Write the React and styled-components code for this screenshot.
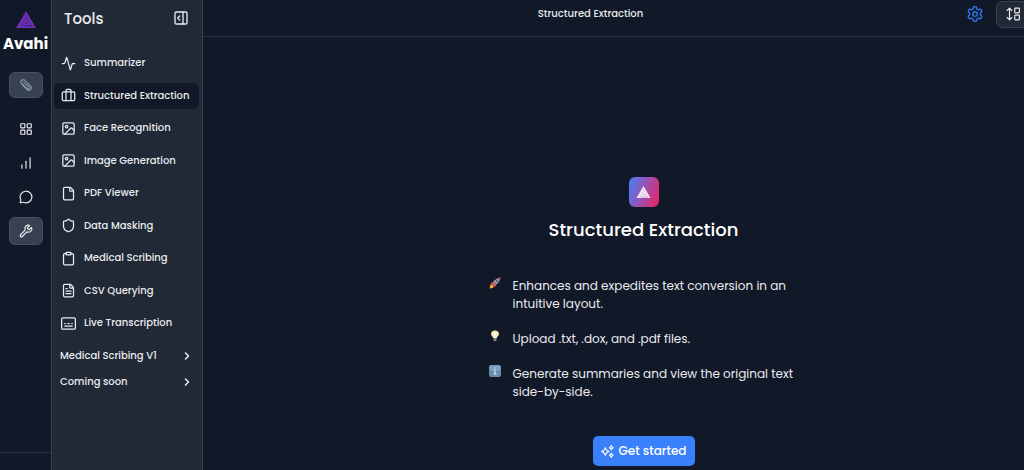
import React from "react";
import styled, { createGlobalStyle, ThemeProvider } from "styled-components";
import {
  Activity,
  Briefcase,
  ChartNoAxesColumnIncreasing,
  ChevronRight,
  Clipboard,
  File,
  FileText,
  Image,
  LayoutGrid,
  MessageCircle,
  PanelRightOpen,
  Settings,
  Shield,
  Wrench,
} from "lucide-react";

const theme = {
  bgColor: "#111827",
  panelColor: "#212936",
  lineColor: "#2b3442",
  raisedColor: "#374151",
  textColor: "#e9ebee",
  blueColor: "#3a80fb",
};

const GlobalStyle = createGlobalStyle`
  * {
    box-sizing: border-box;
  }

  body {
    margin: 0;
    background: ${theme.bgColor};
    color: ${theme.textColor};
    font-family: Poppins, Inter, sans-serif;
    font-size: 10px;
  }

  button {
    padding: 0;
    border: 0;
    background: none;
    color: inherit;
    font: inherit;
    cursor: pointer;
  }

  ul {
    margin: 0;
    padding: 0;
    list-style: none;
  }

  svg {
    display: block;
    flex-shrink: 0;
  }
`;

const Page = styled.div`
  display: flex;
  height: 100vh;
  overflow: hidden;
`;

const Rail = styled.nav`
  flex: 0 0 52px;
  display: flex;
  flex-direction: column;
  align-items: center;
  padding-top: 11px;
  border-right: 1px solid ${(props) => props.theme.raisedColor};
`;

const Brand = styled.div`
  margin: 4px 0 16px;
  color: #fff;
  font-size: 15px;
  line-height: 24px;
  font-weight: 700;
`;

const RailButton = styled.button`
  display: flex;
  justify-content: center;
  align-items: center;
  width: 34px;
  height: ${(props) => (props.$small ? "26px" : "28px")};
  border: 1px solid ${(props) => (props.$filled ? "#465060" : "transparent")};
  border-radius: 6px;
  background: ${(props) =>
    props.$filled ? props.theme.raisedColor : "transparent"};
`;

const RailList = styled.ul`
  display: grid;
  gap: 6px;
  margin-top: 17px;
`;

const RailFooter = styled.div`
  width: 100%;
  height: 18px;
  margin-top: auto;
  border-top: 1px solid ${(props) => props.theme.lineColor};
`;

const Sidebar = styled.aside`
  flex: 0 0 151px;
  min-width: 0;
  padding: 0 3px 0 2px;
  background: ${(props) => props.theme.panelColor};
  border-right: 1px solid ${(props) => props.theme.raisedColor};
`;

const SidebarHeader = styled.div`
  display: flex;
  justify-content: space-between;
  align-items: center;
  height: 36px;
  padding: 0 10px;
  margin-bottom: 14px;
`;

const SidebarTitle = styled.h2`
  margin: 0;
  font-size: 15px;
  font-weight: 500;
`;

const ToolList = styled.ul`
  display: flex;
  flex-direction: column;
  justify-content: space-between;
  height: 286px;
`;

const ToolLink = styled.a`
  display: flex;
  align-items: center;
  gap: 8px;
  height: 26px;
  padding-left: 7px;
  border-radius: 6px;
  background: ${(props) => (props.$active ? props.theme.bgColor : "none")};
  color: inherit;
  font-weight: 500;
  white-space: nowrap;
  text-decoration: none;
`;

const Group = styled.button`
  display: flex;
  justify-content: space-between;
  align-items: center;
  width: 100%;
  height: 26px;
  padding: 0 6px;
  font-weight: 500;
`;

const Groups = styled.div`
  margin-top: 7px;
`;

const Main = styled.main`
  flex: 1 0 auto;
  width: calc(100% - 143px);
`;

const Header = styled.header`
  display: flex;
  align-items: center;
  height: 37px;
  padding: 0 54px 8px 12px;
  border-bottom: 1px solid ${(props) => props.theme.lineColor};
`;

const HeaderTitle = styled.h1`
  flex: 1;
  margin: 0;
  font-size: 10px;
  font-weight: 500;
  text-align: center;
`;

const SettingsButton = styled.button`
  color: #2f6fe4;
`;

const HeaderButton = styled.button`
  display: flex;
  justify-content: center;
  align-items: center;
  width: 34px;
  height: 27px;
  margin-left: 12px;
  border: 1px solid ${(props) => props.theme.raisedColor};
  border-radius: 6px;
  background: ${(props) => props.theme.panelColor};
`;

const Hero = styled.section`
  display: flex;
  flex-direction: column;
  align-items: center;
  padding-top: 140px;
`;

const HeroLogo = styled.div`
  display: flex;
  justify-content: center;
  align-items: center;
  width: 30px;
  height: 30px;
  border-radius: 6px;
  background: linear-gradient(110deg, #4a7cf5 5%, #ea2468 95%);
`;

const HeroTitle = styled.h2`
  margin: 9px 0 33px;
  color: #fff;
  font-size: 18px;
  line-height: 28px;
  font-weight: 500;
`;

const Features = styled.ul`
  display: grid;
  gap: 17px;
  width: 310px;
  font-size: 12px;
  line-height: 18px;
`;

const Feature = styled.li`
  display: flex;
  gap: 12px;
`;

const StartButton = styled.button`
  display: flex;
  justify-content: center;
  align-items: center;
  gap: 5px;
  width: 102px;
  height: 30px;
  margin-top: 35px;
  border-radius: 5px;
  background: ${(props) => props.theme.blueColor};
  color: #fff;
  font-size: 12px;
  font-weight: 500;
`;

const Logo = ({ width, color, line }) => (
  <svg width={width} viewBox="0 0 42 36" fill="none">
    <path d="M21 0 42 36H0Z" fill={color} />
    <g stroke={line} strokeWidth="1.6">
      <path d="M18 6 33 31H15" />
      <path d="M21 13 8 36" />
      <path d="M15 11 3 31" />
      <path d="m21 20 4 6h-7" />
      <path d="M37 31H12" />
    </g>
  </svg>
);

const ClipIcon = () => (
  <svg width="14" height="14" viewBox="0 0 24 24" fill="none">
    <path
      d="m4 10 10 10c4 3 10-2 6-6L10 4C6 1 1 6 4 9l10 9c2 2 5-1 3-3L8 7"
      stroke="#8494a9"
      strokeWidth="2"
      strokeLinecap="round"
    />
  </svg>
);

const CaptionsIcon = ({ size }) => (
  <svg
    width={size}
    height={size}
    viewBox="0 0 24 24"
    fill="none"
    stroke="currentColor"
    strokeWidth="2"
    strokeLinecap="round"
  >
    <rect x="1" y="3" width="22" height="18" rx="2" />
    <path d="M6 12h1M11 12h2M17 12h1M6 16h12" />
  </svg>
);

const SortIcon = () => (
  <svg
    width="14"
    height="14"
    viewBox="0 0 24 24"
    fill="none"
    stroke="currentColor"
    strokeWidth="2"
    strokeLinejoin="round"
    strokeLinecap="round"
  >
    <path d="M6 3v18M2 6l4-4 4 4M2 18l4 4 4-4" />
    <rect x="15" y="2" width="8" height="8" rx="1" />
    <rect x="15" y="14" width="8" height="8" rx="1" />
  </svg>
);

const SparkIcon = () => (
  <svg
    width="13"
    height="13"
    viewBox="0 0 24 24"
    fill="none"
    stroke="currentColor"
    strokeWidth="2"
    strokeLinejoin="round"
  >
    <path d="M8 5c1 4.500 2.500 6 7 7-4.500 1-6 2.500-7 7-1-4.500-2.500-6-7-7 4.500-1 6-2.500 7-7Z" />
    <path d="M19 1c.5 2.500 1.200 3.200 3.500 4-2.300.8-3 1.500-3.500 4-.5-2.500-1.200-3.200-3.500-4 2.300-.8 3-1.500 3.500-4Z" />
    <path d="M19 15c.5 2.500 1.200 3.200 3.500 4-2.300.8-3 1.500-3.500 4-.5-2.500-1.200-3.200-3.500-4 2.300-.8 3-1.500 3.500-4Z" />
  </svg>
);

const RocketIcon = () => (
  <svg width="12" height="12" viewBox="0 0 24 24">
    <path d="m2 15 4-5 5 1-5 6Z" fill="#c92e2c" />
    <path d="m8 22 6-4v-5l-6 5Z" fill="#c92e2c" />
    <path d="m1 23 2-7 3-1 3 3-2 4Z" fill="#f8b62c" />
    <path d="M6 14C10 6 16 2 23 1c-1 7-5 13-13 17Z" fill="#93a3b5" />
    <path d="M18 2c2-1 3-1 5-1 0 2-1 4-2 6Z" fill="#c64642" />
    <circle cx="16" cy="8" r="2" fill="#315879" />
    <path d="m8 16 5-5" stroke="#d83830" strokeWidth="3" />
  </svg>
);

const BulbIcon = () => (
  <svg width="12" height="12" viewBox="0 0 24 24">
    <path
      d="M12 1c-5 0-8 3-8 7 0 4 4 5 5 9h6c1-4 5-5 5-9 0-4-3-7-8-7Z"
      fill="#f5eabb"
    />
    <path d="M9 7c0-2 6-2 6 0l-2 9h-2Z" fill="#fffbe2" />
    <path d="M9 17h6v4l-3 2-3-2Z" fill="#86837a" />
  </svg>
);

const InfoIcon = () => (
  <svg width="12" height="12" viewBox="0 0 24 24">
    <rect width="24" height="24" rx="4" fill="#668eac" />
    <rect x="1" y="1" width="22" height="10" rx="3" fill="#7fa4be" />
    <path
      d="M12 5v2M10 10h2v8M9 18h6"
      stroke="#e6eef4"
      strokeWidth="2"
      fill="none"
    />
  </svg>
);

const railItems = [
  { label: "Dashboard", Icon: LayoutGrid },
  { label: "Analytics", Icon: ChartNoAxesColumnIncreasing },
  { label: "Chat", Icon: MessageCircle },
  { label: "Tools", Icon: Wrench, active: true },
];

const tools = [
  { label: "Summarizer", Icon: Activity },
  { label: "Structured Extraction", Icon: Briefcase, active: true },
  { label: "Face Recognition", Icon: Image },
  { label: "Image Generation", Icon: Image },
  { label: "PDF Viewer", Icon: File },
  { label: "Data Masking", Icon: Shield },
  { label: "Medical Scribing", Icon: Clipboard },
  { label: "CSV Querying", Icon: FileText },
  { label: "Live Transcription", Icon: CaptionsIcon },
];

const features = [
  {
    text: "Enhances and expedites text conversion in an intuitive layout.",
    Icon: RocketIcon,
  },
  { text: "Upload .txt, .dox, and .pdf files.", Icon: BulbIcon },
  {
    text: "Generate summaries and view the original text side-by-side.",
    Icon: InfoIcon,
  },
];

export default () => {
  return (
    <ThemeProvider theme={theme}>
      <GlobalStyle />
      <Page>
        <Rail>
          <Logo width={20} color="#7432c0" line="#35206c" />
          <Brand>Avahi</Brand>
          <RailButton $filled $small aria-label="Attach">
            <ClipIcon />
          </RailButton>
          <RailList>
            {railItems.map(({ label, Icon, active }) => (
              <li key={label}>
                <RailButton $filled={active} aria-label={label}>
                  <Icon size={14} />
                </RailButton>
              </li>
            ))}
          </RailList>
          <RailFooter />
        </Rail>

        <Sidebar>
          <SidebarHeader>
            <SidebarTitle>Tools</SidebarTitle>
            <button aria-label="Collapse">
              <PanelRightOpen size={16} />
            </button>
          </SidebarHeader>
          <ToolList>
            {tools.map(({ label, Icon, active }) => (
              <li key={label}>
                <ToolLink href="#" $active={active}>
                  <Icon size={15} />
                  {label}
                </ToolLink>
              </li>
            ))}
          </ToolList>
          <Groups>
            <Group>
              Medical Scribing V1
              <ChevronRight size={12} strokeWidth={3} />
            </Group>
            <Group>
              Coming soon
              <ChevronRight size={12} strokeWidth={3} />
            </Group>
          </Groups>
        </Sidebar>

        <Main>
          <Header>
            <HeaderTitle>Structured Extraction</HeaderTitle>
            <SettingsButton aria-label="Settings">
              <Settings size={18} />
            </SettingsButton>
            <HeaderButton aria-label="Change layout">
              <SortIcon />
            </HeaderButton>
          </Header>
          <Hero>
            <HeroLogo>
              <Logo width={15} color="#fbeefa" line="#c9a0cf" />
            </HeroLogo>
            <HeroTitle>Structured Extraction</HeroTitle>
            <Features>
              {features.map(({ text, Icon }) => (
                <Feature key={text}>
                  <Icon />
                  <span>{text}</span>
                </Feature>
              ))}
            </Features>
            <StartButton>
              <SparkIcon />
              Get started
            </StartButton>
          </Hero>
        </Main>
      </Page>
    </ThemeProvider>
  );
};
